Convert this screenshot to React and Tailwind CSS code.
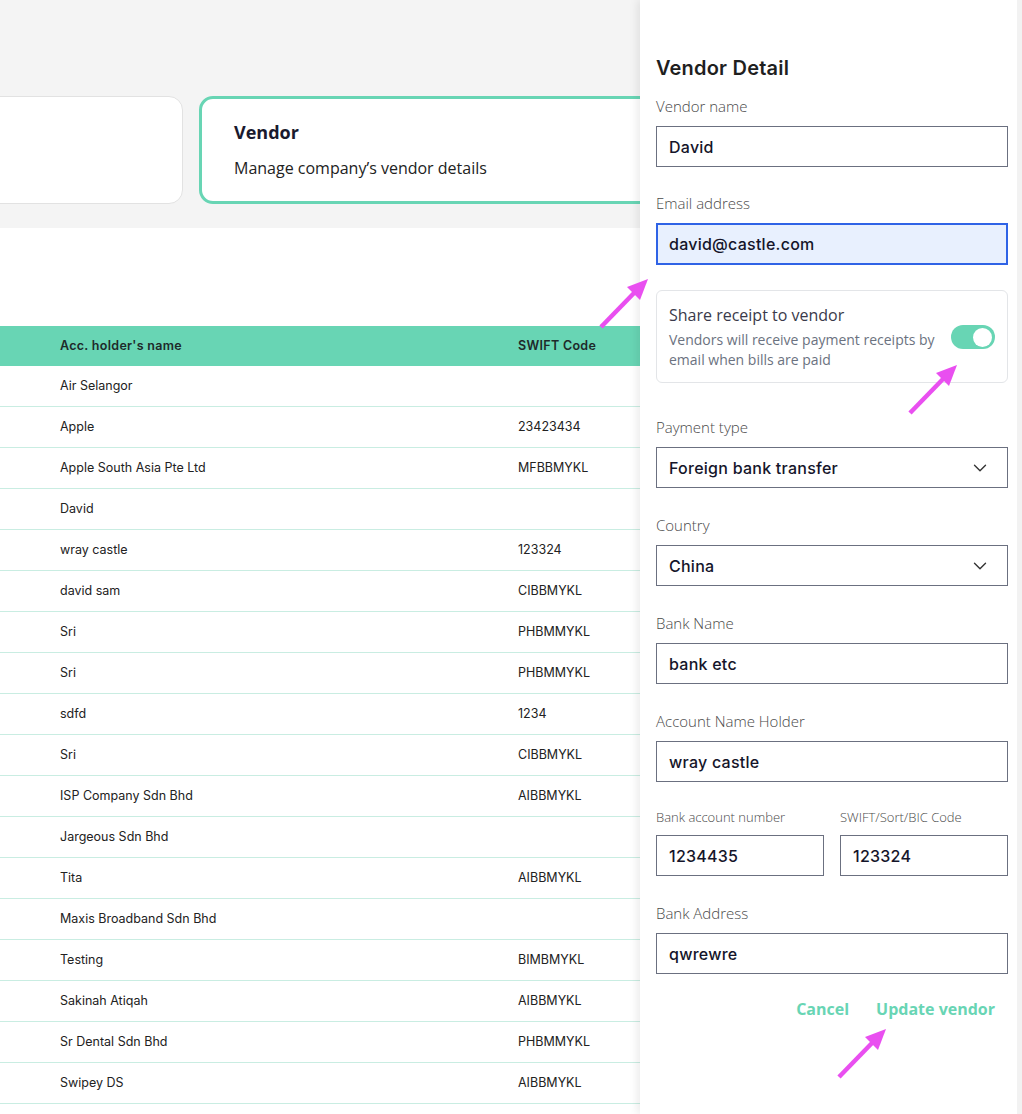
import { ChevronDown } from "lucide-react"

const rows = [
  ["Air Selangor", ""],
  ["Apple", "23423434"],
  ["Apple South Asia Pte Ltd", "MFBBMYKL"],
  ["David", ""],
  ["wray castle", "123324"],
  ["david sam", "CIBBMYKL"],
  ["Sri", "PHBMMYKL"],
  ["Sri", "PHBMMYKL"],
  ["sdfd", "1234"],
  ["Sri", "CIBBMYKL"],
  ["ISP Company Sdn Bhd", "AIBBMYKL"],
  ["Jargeous Sdn Bhd", ""],
  ["Tita", "AIBBMYKL"],
  ["Maxis Broadband Sdn Bhd", ""],
  ["Testing", "BIMBMYKL"],
  ["Sakinah Atiqah", "AIBBMYKL"],
  ["Sr Dental Sdn Bhd", "PHBMMYKL"],
  ["Swipey DS", "AIBBMYKL"],
]

const labelFont = "font-['Open_Sans','Noto_Sans',sans-serif]"
const valueFont = "font-['Inter','Noto_Sans',sans-serif]"

function Arrow({ className }) {
  return (
    <svg className={className} width="50" height="52" viewBox="0 0 50 52" fill="none">
      <line x1="2" y1="50" x2="36" y2="15" stroke="#e94ff0" strokeWidth="4.5" />
      <polygon points="49,2 41,23 28,10" fill="#e94ff0" />
    </svg>
  )
}

function Field({ label, value, small, focused, select, className = "" }) {
  return (
    <div className={className}>
      <div className={`${labelFont} ${small ? "text-[13px] leading-[18px]" : "text-[15px] leading-[22px]"} text-[#4a4a4a] font-light mb-[9px]`}>
        {label}
      </div>
      <div
        className={`flex items-center justify-between px-3 ${
          focused ? "bg-[#e8f0fe] border-2 border-[#2f63e6] h-[42px] px-[11px]" : "h-[41px] bg-white border border-[#6b7080]"
        }`}
      >
        <span className={`${valueFont} text-[16px] font-medium tracking-[0.25px] text-[#15152a]`}>{value}</span>
        {select && <ChevronDown size={22} strokeWidth={1.5} className="text-[#333] mr-1" />}
      </div>
    </div>
  )
}

export default function App() {
  return (
    <div className="relative w-[1022px] h-[1114px] overflow-hidden bg-white">
      {/* page behind the drawer */}
      <div className="bg-[#f4f4f4] h-[228px] pt-[96px]">
        <div className="flex gap-4 -ml-[20px]">
          <div className="w-[203px] h-[108px] bg-white border border-[#e2e2e2] rounded-[14px]" />
          <div className={`w-[480px] h-[108px] bg-white border-[3px] border-[#68d5b4] rounded-[14px] pl-[32px] pt-[21px] ${labelFont}`}>
            <div className="text-[18px] leading-6 font-bold text-[#1a1a2e]">Vendor</div>
            <div className="text-[16px] leading-6 mt-3 text-[#222]">Manage company’s vendor details</div>
          </div>
        </div>
      </div>

      <div className="pt-[98px] w-[640px] font-['Inter','Noto_Sans',sans-serif]">
        <div className="flex items-center h-[40px] bg-[#68d5b4] pl-[60px] text-[12.5px] font-semibold text-[#1e2a2a] tracking-[0.3px]">
          <div className="w-[458px]">Acc. holder's name</div>
          <div>SWIFT Code</div>
        </div>
        {rows.map(([name, code], i) => (
          <div key={i} className="flex items-center h-[41px] pl-[60px] border-b border-[#c9ede2] text-[12.5px] text-[#222]">
            <div className="w-[458px]">{name}</div>
            <div>{code}</div>
          </div>
        ))}
      </div>

      {/* drawer */}
      <div className="absolute top-0 right-0 h-[1114px] w-[382px] bg-white flex shadow-[-3px_0_8px_rgba(0,0,0,0.08)]">
        <div className="flex-1 pl-4 pr-[9px] pt-[54px]">
          <h2 className={`${valueFont} text-[20px] leading-[28px] font-semibold tracking-[0.2px] text-[#1f1f1f]`}>Vendor Detail</h2>
          <Field className="mt-[13px]" label="Vendor name" value="David" />
          <Field className="mt-[25px]" label="Email address" value="david@castle.com" focused />

          <div className="mt-[25px] h-[93px] border border-[#e3e5e8] rounded-[6px] pl-3 pr-3 pt-[12px] flex justify-between">
            <div className={labelFont}>
              <div className="text-[16px] leading-6 text-[#3a3a4a]">Share receipt to vendor</div>
              <div className="text-[14px] leading-5 text-[#6b7280] mt-[3px] w-[278px]">
                Vendors will receive payment receipts by email when bills are paid
              </div>
            </div>
            <div className="mt-[22px] w-[44px] h-[24px] rounded-full bg-[#68d5b4] flex items-center justify-end pr-[3px]">
              <div className="w-[19px] h-[19px] rounded-full bg-white" />
            </div>
          </div>

          <Field className="mt-[33px]" label="Payment type" value="Foreign bank transfer" select />
          <Field className="mt-[26px]" label="Country" value="China" select />
          <Field className="mt-[26px]" label="Bank Name" value="bank etc" />
          <Field className="mt-[26px]" label="Account Name Holder" value="wray castle" />
          <div className="mt-[26px] flex gap-4">
            <Field className="w-[168px]" small label="Bank account number" value="1234435" />
            <Field className="flex-1" small label="SWIFT/Sort/BIC Code" value="123324" />
          </div>
          <Field className="mt-[26px]" label="Bank Address" value="qwrewre" />

          <div className={`mt-[23px] flex justify-end gap-[27px] pr-[13px] ${labelFont} text-[16px] leading-6 font-bold text-[#68d5b4]`}>
            <button>Cancel</button>
            <button>Update vendor</button>
          </div>
        </div>
        <div className="w-[5px] bg-[#f2f2f2]" />
      </div>

      <Arrow className="absolute left-[599px] top-[277px]" />
      <Arrow className="absolute left-[908px] top-[363px]" />
      <Arrow className="absolute left-[837px] top-[1027px]" />
    </div>
  )
}
